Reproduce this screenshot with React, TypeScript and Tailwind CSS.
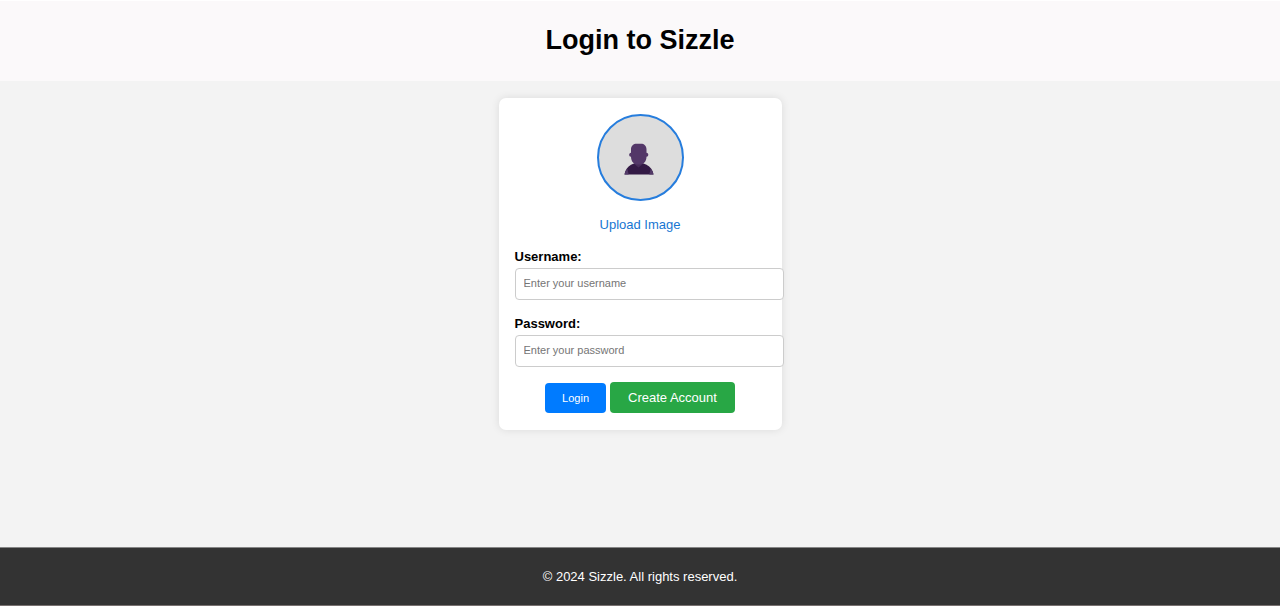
import { useState } from "react";

function Avatar() {
  return (
    <svg viewBox="0 0 30 32" className="mt-[2px] mr-[3px] h-8 w-[30px]" aria-hidden="true">
      <path d="M0.5 31.5C1.2 27 3.5 23.5 7 21.7L10.5 20.3H19L22.5 21.7C26.5 23.5 28.8 27 29.5 31.5Z" fill="#331a45" />
      <path d="M0.5 31.5C0.9 29.5 1.9 27.5 3.3 25.8L4.7 31.5ZM29.5 31.5C29.1 29.5 28.1 27.5 26.7 25.8L25.3 31.5Z" fill="#533a68" />
      <path d="M10.8 17.5H18.2V21.5L14.5 24.5L10.8 21.5Z" fill="#462c59" />
      <path d="M7 9.8V6.3C7 2.6 9.6 0.7 12.6 0.7H17C20 0.7 22.5 2.6 22.5 6.3V9.8C24.9 9.7 24.9 13.8 22.5 13.8C22.4 18.8 19.6 21.6 14.7 21.6C9.8 21.6 7.1 18.8 7 13.8C4.600 13.8 4.600 9.700 7 9.800Z" fill="#533768" />
    </svg>
  );
}

type FieldProps = { id: string; label: string; type: string; placeholder: string };

function Field({ id, label, type, placeholder }: FieldProps) {
  return (
    <div className="flex flex-col gap-[3px]">
      <label htmlFor={id} className="text-[13px] leading-4 font-bold">
        {label}
      </label>
      <input
        id={id}
        name={id}
        type={type}
        placeholder={placeholder}
        className="h-8 w-[calc(100%+18px)] rounded border border-[#ccc] bg-white px-2 pb-[2px] text-[11px] placeholder:text-[#757575]"
      />
    </div>
  );
}

export default function App() {
  const [fileName, setFileName] = useState("Upload Image");

  return (
    <div className="flex min-h-screen flex-col bg-[#f3f3f3] font-['Liberation_Sans',Arial,sans-serif] text-black">
      <header className="border-t border-white bg-[#fbf9fa] pt-[21px] pb-[23px] text-center">
        <h1 className="text-[27px] leading-9 font-bold">Login to Sizzle</h1>
      </header>

      <main className="flex flex-1 flex-col items-center px-4 py-[17px]">
        <form
          onSubmit={(event) => event.preventDefault()}
          className="w-full max-w-[283px] rounded-[7px] bg-white px-4 pt-4 pb-[17px] shadow-[0_0_9px_rgba(0,0,0,0.1)]"
        >
          <div className="flex flex-col items-center gap-4">
            <div className="flex size-[87px] items-center justify-center rounded-full border-2 border-[#267ddd] bg-[#ddd]">
              <Avatar />
            </div>
            <label htmlFor="avatar" className="cursor-pointer text-[13px] leading-4 text-[#1776d2]">
              {fileName}
            </label>
            <input
              id="avatar"
              type="file"
              accept="image/*"
              className="hidden"
              onChange={(event) => setFileName(event.target.files?.[0]?.name ?? "Upload Image")}
            />
          </div>

          <div className="mt-4 flex flex-col gap-4">
            <Field id="username" label="Username:" type="text" placeholder="Enter your username" />
            <Field id="password" label="Password:" type="password" placeholder="Enter your password" />
          </div>

          <div className="mt-[15px] flex items-baseline justify-center gap-1">
            <button type="submit" className="h-[30px] rounded bg-[#007bff] px-[17px] text-[11px] text-white">
              Login
            </button>
            <a href="#create-account" className="rounded bg-[#28a745] px-[18px] py-2 text-[13px] leading-[15px] text-white">
              Create Account
            </a>
          </div>
        </form>
      </main>

      <footer className="border-t border-b border-t-[#858585] border-b-[#77706f] bg-[#333] py-5 text-center text-[13px] leading-[17px] text-white">
        <p>© 2024 Sizzle. All rights reserved.</p>
      </footer>
    </div>
  );
}
